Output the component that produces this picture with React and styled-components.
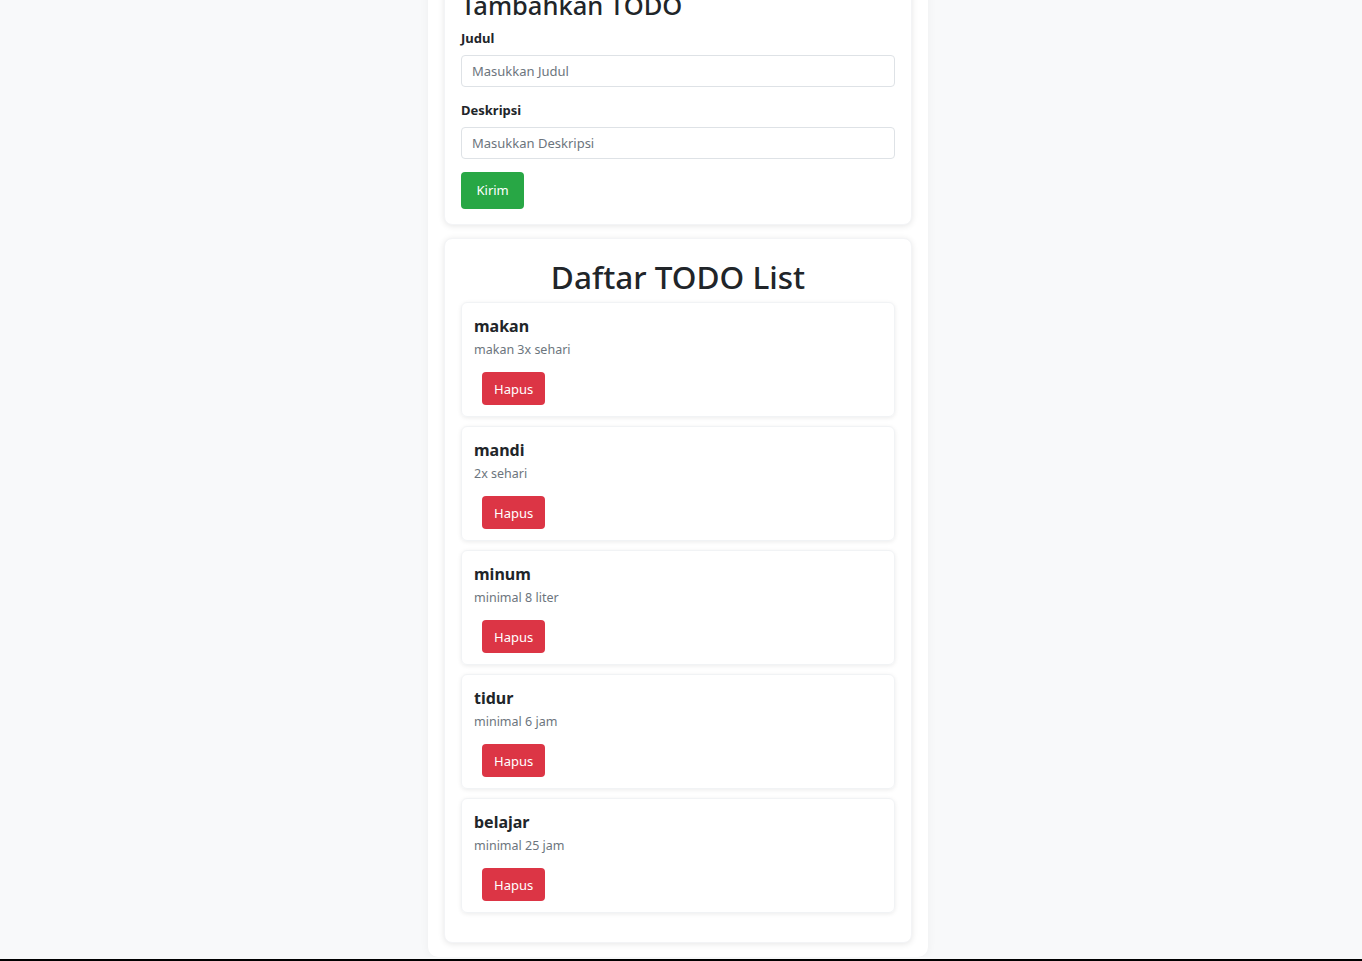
import React from 'react'
import styled, { createGlobalStyle } from 'styled-components'

const GlobalStyle = createGlobalStyle`
  html, body {
    margin: 0;
    padding: 0;
    background: #f8f9fa;
    font-family: "Noto Sans", "Open Sans", sans-serif;
    color: #212529;
  }
  * { box-sizing: border-box; }
`

const Page = styled.div`
  display: flex;
  justify-content: center;
  padding-right: 6px;
  margin-top: -46px;
`

const Wrapper = styled.div`
  width: 500px;
  background: #fff;
  padding: 16px 16px 14px;
  border-radius: 0 0 10px 10px;
  box-shadow: 0 0 10px rgba(0, 0, 0, 0.05);
  display: flex;
  flex-direction: column;
  gap: 13px;
`

const Card = styled.div`
  background: #fff;
  border: 1px solid #f3f4f6;
  border-radius: 8px;
  padding: 16px 16px ${p => p.$bottom || 15}px;
  box-shadow: 0 1px 6px rgba(0, 0, 0, 0.1);
`

const Heading = styled.h2`
  margin: ${p => (p.$center ? '3px 0 6px' : '0 0 5px')};
  font-size: ${p => (p.$center ? 31.5 : 25.5)}px;
  font-weight: 500;
  line-height: ${p => (p.$center ? 38 : 36)}px;
  text-align: ${p => (p.$center ? 'center' : 'left')};
`

const Field = styled.div`
  margin-bottom: 13px;
`

const Label = styled.label`
  display: block;
  font-size: 13px;
  font-weight: 700;
  line-height: 21px;
  margin-bottom: 6px;
`

const Input = styled.input`
  display: block;
  width: 100%;
  height: 32px;
  padding: 0 10px;
  border: 1px solid #dee2e6;
  border-radius: 4px;
  font-family: inherit;
  font-size: 13px;
  color: #495057;
  &::placeholder { color: #6c757d; }
`

const Button = styled.button`
  border: none;
  border-radius: 4px;
  color: #fff;
  font-family: inherit;
  font-size: 13px;
  line-height: 20px;
  cursor: pointer;
  background: ${p => (p.$danger ? '#dc3545' : '#28a745')};
  padding: ${p => (p.$danger ? '7px 12px 6px' : '8px 15.5px 9px')};
  margin-left: ${p => (p.$danger ? 8 : 0)}px;
`

const List = styled.div`
  display: flex;
  flex-direction: column;
  gap: 9px;
`

const Item = styled.div`
  border: 1px solid #f1f3f5;
  border-radius: 6px;
  padding: 11px 12px 11px;
  box-shadow: 0 1px 4px rgba(0, 0, 0, 0.08);
`

const ItemTitle = styled.h5`
  margin: 0;
  font-size: 16px;
  font-weight: 700;
  line-height: 24px;
`

const ItemDesc = styled.p`
  margin: 2px 0 12px;
  font-size: 12.5px;
  line-height: 20px;
  color: #6c757d;
`

const ScreenEdge = styled.div`
  position: fixed;
  left: 0;
  right: 0;
  bottom: 0;
  height: 2px;
  background: #000;
`

const todos = [
  { id: 1, title: 'makan', desc: 'makan 3x sehari' },
  { id: 2, title: 'mandi', desc: '2x sehari' },
  { id: 3, title: 'minum', desc: 'minimal 8 liter' },
  { id: 4, title: 'tidur', desc: 'minimal 6 jam' },
  { id: 5, title: 'belajar', desc: 'minimal 25 jam' },
]

export default function App() {
  return (
    <>
      <GlobalStyle />
      <Page>
        <Wrapper>
          <Card>
            <Heading>Tambahkan TODO</Heading>
            <Field>
              <Label htmlFor="judul">Judul</Label>
              <Input id="judul" placeholder="Masukkan Judul" />
            </Field>
            <Field>
              <Label htmlFor="deskripsi">Deskripsi</Label>
              <Input id="deskripsi" placeholder="Masukkan Deskripsi" />
            </Field>
            <Button>Kirim</Button>
          </Card>
          <Card $bottom={29}>
            <Heading $center>Daftar TODO List</Heading>
            <List>
              {todos.map(todo => (
                <Item key={todo.id}>
                  <ItemTitle>{todo.title}</ItemTitle>
                  <ItemDesc>{todo.desc}</ItemDesc>
                  <Button $danger>Hapus</Button>
                </Item>
              ))}
            </List>
          </Card>
        </Wrapper>
      </Page>
      <ScreenEdge />
    </>
  )
}
